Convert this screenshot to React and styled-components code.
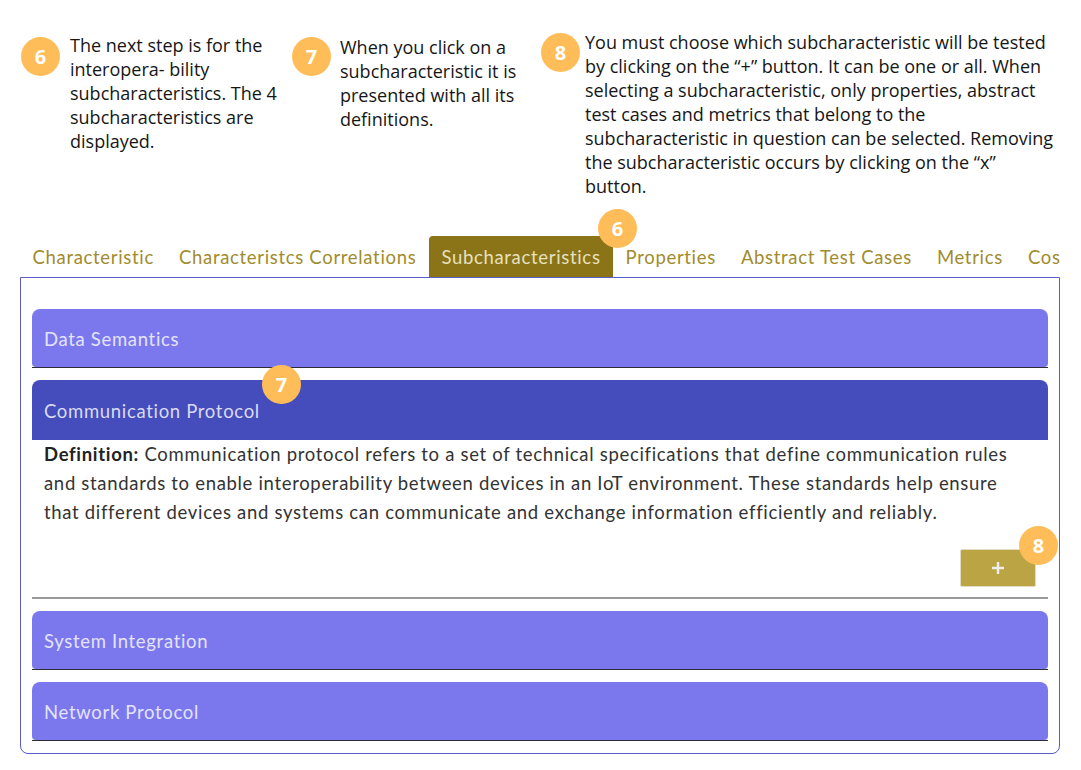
import styled, { createGlobalStyle } from "styled-components";

const GlobalStyle = createGlobalStyle`
  * { box-sizing: border-box; }
  body {
    margin: 0;
    background: #fff;
    font-family: "Lato", "Open Sans", sans-serif;
  }
`;

const Page = styled.div`
  width: 1081px;
  height: 770px;
  overflow: hidden;
  letter-spacing: 0.68px;
`;

const Notes = styled.div`
  display: flex;
  align-items: flex-start;
  padding-left: 21px;
  height: 236px;
  letter-spacing: 0;
`;

const Note = styled.div`
  display: flex;
  align-items: flex-start;
  gap: ${(p) => p.gap}px;
  width: ${(p) => p.width}px;
`;

const Badge = styled.div`
  flex: none;
  width: 39px;
  height: 39px;
  border-radius: 50%;
  background: #ffbd59;
  color: #fff;
  font-family: "Open Sans", sans-serif;
  font-weight: 700;
  font-size: 20px;
  letter-spacing: 0;
  display: flex;
  align-items: center;
  justify-content: center;
  margin-top: ${(p) => p.top || 0}px;
`;

const FloatBadge = styled(Badge)`
  position: absolute;
  margin: 0;
  top: ${(p) => p.y}px;
  left: ${(p) => p.x}px;
  z-index: 2;
`;

const NoteText = styled.div`
  margin-top: ${(p) => p.top}px;
  font-family: "Open Sans", sans-serif;
  font-size: 18px;
  line-height: 24px;
  color: #161616;

  span {
    display: block;
    white-space: nowrap;
  }
`;

const TabsClip = styled.div`
  position: relative;
`;

const Tabs = styled.div`
  display: flex;
  margin-left: 20px;
  width: 1040px;
  height: 41px;
  overflow: hidden;
`;

const Tab = styled.div`
  flex: none;
  height: 41px;
  padding: 0 12.5px;
  display: flex;
  align-items: center;
  font-size: 18.5px;
  white-space: nowrap;
  border-radius: 4px 4px 0 0;
  color: ${(p) => (p.active ? "#e7e0bf" : "#a08c2c")};
  background: ${(p) => (p.active ? "#8a7417" : "transparent")};
`;

const Panel = styled.div`
  margin-left: 20px;
  width: 1040px;
  border: 1.5px solid #5b5dcc;
  border-radius: 0 0 8px 8px;
  padding: 31px 11px 12px;
  display: flex;
  flex-direction: column;
  gap: 12px;
`;

const Item = styled.div`
  position: relative;
  border-bottom: ${(p) => (p.open ? "2px solid #9a9a9a" : "1px solid #2d2d3a")};
`;

const Header = styled.div`
  height: ${(p) => (p.open ? 60 : 58)}px;
  padding: 2px 12px 0;
  display: flex;
  align-items: center;
  border-radius: 8px 8px ${(p) => (p.open ? "0 0" : "4px 4px")};
  background: ${(p) => (p.open ? "#454cbb" : "#7b78ee")};
  color: ${(p) => (p.open ? "#d9dbf2" : "#e4e3fb")};
  font-size: 18.5px;
`;

const Body = styled.div`
  padding: 0 12px 10px;
  color: #333;
  font-size: 18.5px;
  line-height: 29px;

  span {
    display: block;
    white-space: nowrap;
  }
  b {
    font-weight: 700;
    color: #222;
  }
`;

const Actions = styled.div`
  display: flex;
  justify-content: flex-end;
  margin-top: 22px;
`;

const AddButton = styled.div`
  position: relative;
  width: 76px;
  height: 38px;
  background: #bba444;
  border: 1px solid #e3dcc0;
  border-radius: 2px;
  color: #eeeeee;
  display: flex;
  align-items: center;
  justify-content: center;
`;

const notes = [
  {
    n: 6,
    width: 271,
    gap: 10,
    badgeTop: 37,
    textTop: 33,
    lines: [
      "The next step is for the",
      "interopera- bility",
      "subcharacteristics. The 4",
      "subcharacteristics are",
      "displayed.",
    ],
  },
  {
    n: 7,
    width: 249,
    gap: 9,
    badgeTop: 37,
    textTop: 35,
    lines: [
      "When you click on a",
      "subcharacteristic it is",
      "presented with all its",
      "definitions.",
    ],
  },
  {
    n: 8,
    width: 519,
    gap: 5,
    badgeTop: 33,
    textTop: 30,
    lines: [
      "You must choose which subcharacteristic will be tested",
      "by clicking on the \u201c+\u201d button. It can be one or all. When",
      "selecting a subcharacteristic, only properties, abstract",
      "test cases and metrics that belong to the",
      "subcharacteristic in question can be selected. Removing",
      "the subcharacteristic occurs by clicking on the \u201cx\u201d",
      "button.",
    ],
  },
];

const tabs = [
  "Characteristic",
  "Characteristcs Correlations",
  "Subcharacteristics",
  "Properties",
  "Abstract Test Cases",
  "Metrics",
  "Cost",
];

const PlusIcon = () => (
  <svg width="14" height="14" viewBox="0 0 14 14">
    <path d="M7 1v12M1 7h12" stroke="currentColor" strokeWidth="2.4" />
  </svg>
);

export default function App() {
  return (
    <Page>
      <GlobalStyle />
      <Notes>
        {notes.map((note) => (
          <Note key={note.n} width={note.width} gap={note.gap}>
            <Badge top={note.badgeTop}>{note.n}</Badge>
            <NoteText top={note.textTop}>
              {note.lines.map((line) => (
                <span key={line}>{line}</span>
              ))}
            </NoteText>
          </Note>
        ))}
      </Notes>

      <TabsClip>
        <FloatBadge x={598} y={-27}>6</FloatBadge>
        <Tabs>
          {tabs.map((t) => (
            <Tab key={t} active={t === "Subcharacteristics"}>
              {t}
            </Tab>
          ))}
        </Tabs>
      </TabsClip>

      <Panel>
        <Item>
          <Header>Data Semantics</Header>
        </Item>

        <Item open>
          <FloatBadge x={230} y={-15}>7</FloatBadge>
          <Header open>Communication Protocol</Header>
          <Body>
            <span>
              <b>Definition:</b> Communication protocol refers to a set of
              technical specifications that define communication rules
            </span>
            <span>
              and standards to enable interoperability between devices in an
              IoT environment. These standards help ensure
            </span>
            <span>
              that different devices and systems can communicate and exchange
              information efficiently and reliably.
            </span>
            <Actions>
              <AddButton>
                <PlusIcon />
                <FloatBadge x={58} y={-24}>8</FloatBadge>
              </AddButton>
            </Actions>
          </Body>
        </Item>

        <Item>
          <Header>System Integration</Header>
        </Item>

        <Item>
          <Header>Network Protocol</Header>
        </Item>
      </Panel>
    </Page>
  );
}
